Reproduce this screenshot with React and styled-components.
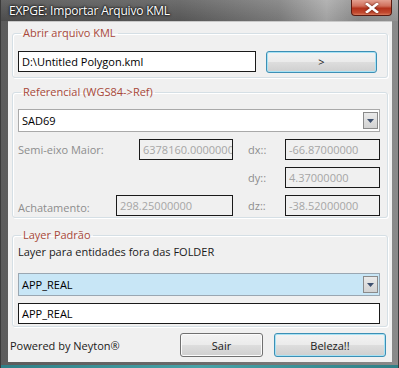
import React from 'react'
import styled, { createGlobalStyle } from 'styled-components'

const Global = createGlobalStyle`
  html, body, #root { margin: 0; padding: 0; width: 399px; height: 368px; overflow: hidden; }
  body { font-family: "Open Sans", "Noto Sans", sans-serif; font-size: 11px; }
`

export default function App() {
  return (
    <>
      <Global />
      <Window>
        <TitleBar>
          <Title>EXPGE: Importar Arquivo KML</Title>
          <CloseButton>
            <svg width="14" height="10" viewBox="0 0 14 10">
              <path d="M2 1 L12 9 M12 1 L2 9" stroke="#fff" strokeWidth="2.6" strokeLinecap="square" />
            </svg>
          </CloseButton>
        </TitleBar>
        <Client>
          <Group $top={4}>
            <Legend>Abrir arquivo KML</Legend>
            <Row $mt={10}>
              <TextBox $w={238}>D:\Untitled Polygon.kml</TextBox>
              <Button $default $w={111}>&gt;</Button>
            </Row>
          </Group>

          <Group $top={7} $pb={1}>
            <Legend>Referencial (WGS84-&gt;Ref)</Legend>
            <Combo $mt={10}>
              <span>SAD69</span>
              <DropButton><Arrow /></DropButton>
            </Combo>
            <Params>
              <Label>Semi-eixo Maior:</Label>
              <TextBox $disabled $w={94} style={{ justifySelf: 'end' }}>6378160.0000000</TextBox>
              <Label $pl={15}>dx::</Label>
              <TextBox $disabled>-66.87000000</TextBox>

              <Label $col={3} $pl={15}>dy::</Label>
              <TextBox $disabled>4.37000000</TextBox>

              <Label $low>Achatamento:</Label>
              <TextBox $disabled>298.25000000</TextBox>
              <Label $pl={15}>dz::</Label>
              <TextBox $disabled>-38.52000000</TextBox>
            </Params>
          </Group>

          <Group $top={10} $pb={2}>
            <Legend>Layer Padrão</Legend>
            <Caption>Layer para entidades fora das FOLDER</Caption>
            <Combo $mt={14} $selected>
              <span>APP_REAL</span>
              <DropButton><Arrow /></DropButton>
            </Combo>
            <TextBox $mt={7}>APP_REAL</TextBox>
          </Group>

          <Footer>
            <Powered>Powered by Neyton®</Powered>
            <Button $w={83} $h={24}>Sair</Button>
            <Button $default $w={112} $h={24}>Beleza!!</Button>
          </Footer>
        </Client>
      </Window>
    </>
  )
}

function Arrow() {
  return (
    <svg width="7" height="4" viewBox="0 0 7 4">
      <path d="M0 0 H7 L3.5 4 Z" fill="#3d4f6e" />
    </svg>
  )
}

const Window = styled.div`
  width: 399px;
  height: 368px;
  box-sizing: border-box;
  display: flex;
  flex-direction: column;
  background: linear-gradient(to right, #5c5c5c, #6a6a6a 50%, #8a8a8a);
  padding: 0 6px 0 7px;
  border-left: 1px solid #3a3a3a;
  border-right: 1px solid #3a3a3a;
  position: relative;
  &::after {
    content: '';
    position: absolute;
    left: 0; right: 0; bottom: 0;
    height: 3px;
    background: linear-gradient(to right, #2f7f86, #48a3a8 50%, #2f7f86);
  }
`

const TitleBar = styled.div`
  height: 21px;
  margin: 0 -6px 0 -7px;
  padding: 0 6px 0 7px;
  display: flex;
  align-items: flex-start;
  justify-content: space-between;
  background:
    linear-gradient(to bottom, rgba(255,255,255,0.12), rgba(0,0,0,0.05)),
    linear-gradient(to right, #505050 0%, #5a5a5a 45%, #7d7d7d 70%, #a9a9a9 82%, #8c8c8c 90%, #9a9a9a 100%);
`

const Title = styled.div`
  font-family: "Open Sans", "Noto Sans", sans-serif;
  font-size: 12px;
  line-height: 14px;
  color: #fff;
  margin-top: 4px;
  margin-left: 1px;
  letter-spacing: -0.2px;
  text-shadow: 0 0 3px #000, 0 0 2px #000;
`

const CloseButton = styled.div`
  width: 41px;
  height: 16px;
  box-sizing: border-box;
  border: 1px solid #5a1a10;
  border-top: none;
  border-radius: 0 0 4px 4px;
  background: linear-gradient(to bottom, #e3a090 0%, #d0705c 40%, #b3321b 55%, #c24a30 85%, #d77a5c 100%);
  display: flex;
  align-items: center;
  justify-content: center;
  svg { filter: drop-shadow(0 0 1px #5a1a10); }
`

const Client = styled.div`
  flex: 1;
  margin-bottom: 6px;
  background: #f0f0f0;
  padding: 0 4px 0 4px;
  display: flex;
  flex-direction: column;
  border-top: 1px solid #c9c9c9;
`

const Group = styled.fieldset`
  margin: ${p => p.$top}px 0 0 0;
  padding: 0 7px ${p => p.$pb ?? 4}px 5px;
  border: 1px solid #d5dfe5;
  border-radius: 3px;
  box-shadow: inset 1px 1px 0 #fff, 1px 1px 0 #fff;
  display: flex;
  flex-direction: column;
  min-width: 0;
`

const Legend = styled.legend`
  color: #a8493a;
  font-size: 11px;
  line-height: 14px;
  padding: 0 2px;
  margin-left: 3px;
`

const Row = styled.div`
  display: flex;
  align-items: center;
  gap: 10px;
  margin-top: ${p => p.$mt || 0}px;
  height: 23px;
`

const TextBox = styled.div`
  box-sizing: border-box;
  height: 21px;
  width: ${p => (p.$w ? p.$w + 'px' : 'auto')};
  margin-top: ${p => p.$mt || 0}px;
  border: 1px solid #1a1a1a;
  background: ${p => (p.$disabled ? '#f0f0f0' : '#fff')};
  color: ${p => (p.$disabled ? '#a6a6a6' : '#000')};
  padding: 0 3px;
  display: flex;
  align-items: center;
  white-space: nowrap;
  overflow: hidden;
  font-size: 11px;
`

const Button = styled.div`
  box-sizing: border-box;
  width: ${p => p.$w}px;
  height: ${p => p.$h || 22}px;
  border-radius: 3px;
  border: 1px solid ${p => (p.$default ? '#3c8fb5' : '#707070')};
  box-shadow: inset 0 0 0 1px ${p => (p.$default ? '#a8e2f4' : '#fbfbfb')};
  background: linear-gradient(to bottom, #f3f3f3 0%, #ebebeb 48%, #dddddd 52%, #cfcfcf 100%);
  display: flex;
  align-items: center;
  justify-content: center;
  color: #1a1a1a;
  font-size: 11px;
`

const Combo = styled.div`
  box-sizing: border-box;
  height: 23px;
  margin-top: ${p => p.$mt || 0}px;
  border: 1px solid ${p => (p.$selected ? '#9aa7b2' : '#a9a9a9')};
  background: ${p => (p.$selected ? '#c8e6f6' : '#fff')};
  display: flex;
  align-items: center;
  justify-content: space-between;
  padding: 0 1px 0 3px;
  color: #000;
`

const DropButton = styled.div`
  width: 15px;
  height: 17px;
  box-sizing: border-box;
  border: 1px solid #8a8a8a;
  background: linear-gradient(to bottom, #eaeaea, #d2d2d2);
  display: flex;
  align-items: center;
  justify-content: center;
`

const Params = styled.div`
  display: grid;
  grid-template-columns: 1fr 117px 52px 95px;
  grid-auto-rows: 21px;
  row-gap: 7px;
  margin-top: 7px;
`

const Label = styled.div`
  grid-column: ${p => p.$col || 'auto'};
  color: #8d8d8d;
  display: flex;
  align-items: center;
  padding-left: ${p => p.$pl || 0}px;
  padding-top: ${p => (p.$low ? 3 : 0)}px;
  white-space: nowrap;
`

const Caption = styled.div`
  margin-top: 2px;
  line-height: 15px;
  color: #1a1a1a;
`

const Footer = styled.div`
  display: flex;
  align-items: center;
  gap: 11px;
  margin-top: 6px;
  padding: 0 2px 0 0;
  margin-left: -2px;
`

const Powered = styled.div`
  flex: 1;
  color: #1a1a1a;
`
